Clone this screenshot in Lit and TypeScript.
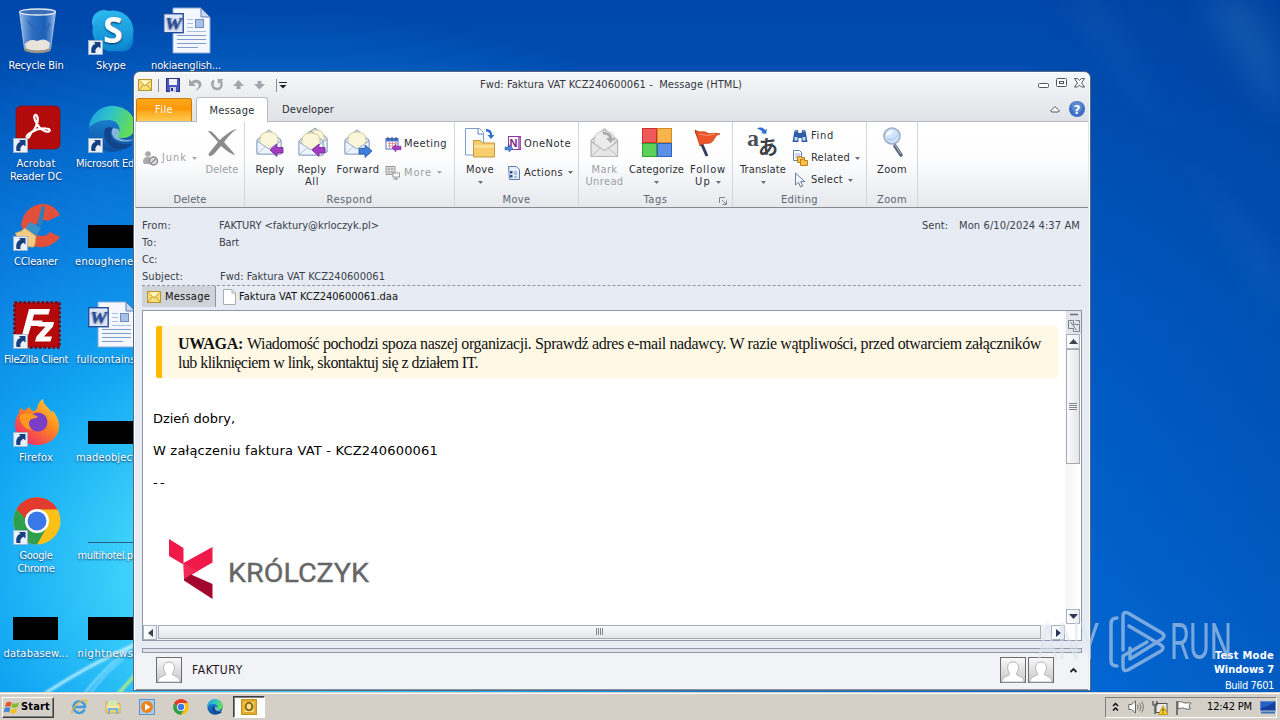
import { LitElement, html, css, svg, nothing, TemplateResult } from "lit";
import { customElement, property } from "lit/decorators.js";

/** A single line of text whose tracking is adjusted to a given advance width. */
@customElement("fit-text")
class FitText extends LitElement {
  @property({ type: Number }) w = 0;
  static styles = css`
    :host { display: inline-block; white-space: pre; }
  `;
  render() { return html`<slot></slot>`; }
  firstUpdated() {
    const n = (this.textContent || "").length;
    if (!this.w || !n) return;
    const natural = this.getBoundingClientRect().width;
    this.style.letterSpacing = `${(this.w - natural) / n}px`;
  }
}

const t = (text: string, w: number) => html`<fit-text w=${w}>${text}</fit-text>`;
const pic = (w: number, h: number, body: unknown, vb = `0 0 ${w} ${h}`) =>
  html`<svg class="pic" width=${w} height=${h} viewBox=${vb}>${body}</svg>`;

/* ---------- shared artwork ---------- */
const shortcut = svg`
  <rect x=".5" y="33.500" width="14" height="14" fill="#e9f0f8" stroke="#9db2cc" stroke-width=".8"/>
  <path d="M3.500 46c-1-5.500 1.200-8.500 4-9l-1.500-2h6.500v6.500l-2-1.800c-2.500 1-3.600 2.800-3 6.300z" fill="#173f80"/>`;
const edge = svg`
  <defs>
    <linearGradient id="eg" x1="0" y1="0" x2="1" y2=".3"><stop offset="0" stop-color="#1b9de2"/><stop offset=".5" stop-color="#2fc3c8"/><stop offset="1" stop-color="#63dc58"/></linearGradient>
    <linearGradient id="eb" x1="0" y1="0" x2="0" y2="1"><stop offset="0" stop-color="#1e8fe0"/><stop offset="1" stop-color="#0d4f9e"/></linearGradient>
  </defs>
  <circle cx="24" cy="24" r="23" fill="url(#eb)"/>
  <path d="M1 23C2 10 12 1 24 1c14 0 23 9 23 20 0 8-6 12-12 12-5 0-7-2-5-4 4-5 0-14-9-14C10 15 2 20 1 23z" fill="url(#eg)"/>
  <path d="M17 24c-3 9 3 20 16 20 5 0 9-2 12-6-4 2-20 3-22-8-.5-3 .5-5 2-7-3-1.500-6-1-8 1z" fill="#12448c"/>
  <path d="M25 23c-3 4-1 11 7 13 6 1.500 12 0 14-2-6 2-14 1-16-3-1-2 3-3 0-7z" fill="#dff3fb" opacity=".55"/>`;
const chrome = svg`
  <circle cx="24" cy="24" r="23.500" fill="#fbc116"/>
  <path d="M24 24 3.600 12.300A23.500 23.500 0 0 1 44.400 12.300H24z" fill="#e33b2e"/>
  <path d="M3.600 12.300A23.500 23.500 0 0 0 24 47.500L34 30 24 24 14 29.500z" fill="#2f9e4c"/>
  <path d="M3.600 12.300 14 30l5-15z" fill="#2f9e4c"/><path d="M3.600 12.300C9 3 17 .5 24 .5s16 3.500 20.400 11.800H24c-6 0-10 4-11.500 9z" fill="#e33b2e"/>
  <circle cx="24" cy="24" r="12" fill="#fff"/><circle cx="24" cy="24" r="9.500" fill="#3b78e7"/>`;
const wordDoc = svg`
  <path d="M10 1h28l9 9v36H10z" fill="#f4f8fe" stroke="#8da6cf"/>
  <path d="M38 1v9h9z" fill="#c9d8f0" stroke="#5d7eb5"/>
  <path d="M14 28.500h29M14 32.500h29M14 36.500h29M14 40.500h21" stroke="#7f9ccc"/>
  <path d="M24 12.500h6M24 16.500h6M24 20.500h6M24 24.500h19" stroke="#a9bee0"/>
  <rect x="32.500" y="12.500" width="8" height="8" fill="#a9c0e6" stroke="#6c8cc4"/>
  <rect x=".7" y="6.700" width="19.500" height="19" fill="#dfe8f7" stroke="#244e9c" stroke-width="1.400"/>
  <text x="2" y="22" class="wmark" textLength="17" lengthAdjust="spacingAndGlyphs">W</text>`;
const envelope = (gray = false) => svg`
  <path d="M2 12 14 2l12 10v14H2z" fill=${gray ? "#dedede" : "#dfe9f6"} stroke=${gray ? "#b5b5b5" : "#7f98bd"}/>
  <path d="M5 12q0-8 9-8t9 8v5l-9 4-9-4z" fill=${gray ? "#ececec" : "#fbf6da"} stroke=${gray ? "#c4c4c4" : "#cbbf8a"} stroke-width=".8"/>
  <path d="M2 13l12 8 12-8v13H2z" fill=${gray ? "#e6e6e6" : "#eef4fc"} stroke=${gray ? "#b5b5b5" : "#8ea6c9"} stroke-width=".9"/>
  <path d="M2 26l9-8M26 26l-9-8" stroke=${gray ? "#bbb" : "#9fb3d1"} stroke-width=".8"/>`;
const purpleArrow = svg`<path d="M16 22l7-6v3.500h6v5.500h-6v3.500z" fill="#a33bc4" stroke="#73248f" stroke-width=".8"/>`;
const person = pic(26, 26, svg`
  <defs><linearGradient id="pg" x1="0" y1="0" x2="0" y2="1"><stop offset="0" stop-color="#fafafa"/><stop offset="1" stop-color="#c6c6c6"/></linearGradient></defs>
  <rect x=".5" y=".5" width="25" height="25" fill="url(#pg)" stroke="#6d6d6d"/>
  <path d="M2 25c0-5 4-5 7-7 1-1 .5-2-.5-3.500C6.500 10 7.500 5 13 5s6.500 5 4.500 9.500c-1 1.500-1.500 2.500-.5 3.500 3 2 7 2 7 7z" fill="#fff" stroke="#b5b5b5"/>`);
const mailIcon = pic(14, 12, svg`
  <rect x=".5" y=".5" width="13" height="11" fill="#fbe07a" stroke="#b8922c"/>
  <path d="M1.500 2l5.500 5 5.500-5M1 11l4-5M13 11l-4-5" stroke="#c79a28" fill="none"/>
  <path d="M2 1.500h10L7 6z" fill="#fff6c9"/>`);
const caret = (gray = false) =>
  html`<svg class="pic caret" width="5" height="3" viewBox="0 0 5 3"><path d="M0 0h5L2.500 3z" fill=${gray ? "#aaa" : "#6a7078"}/></svg>`;

/* ---------- desktop icons ---------- */
const desk: Record<string, TemplateResult> = {
  bin: pic(48, 48, svg`
    <defs><linearGradient id="bn" x1="0" y1="0" x2="1" y2="0"><stop offset="0" stop-color="#b9d4f2" stop-opacity=".85"/><stop offset=".35" stop-color="#5e95d8" stop-opacity=".5"/><stop offset=".7" stop-color="#3a78c8" stop-opacity=".45"/><stop offset="1" stop-color="#c6dcf4" stop-opacity=".85"/></linearGradient></defs>
    <path d="M6.500 5h36l-5 37q-13 5-26 0z" fill="url(#bn)" stroke="#b7cde6" stroke-width=".8"/>
    <ellipse cx="24.500" cy="5" rx="18" ry="3" fill="#3c6fb5" stroke="#dfe8f2" stroke-width="1.300"/>
    <path d="M12 37q5-6 12-3 8-4 13 2l-1 6q-11 4-23 0z" fill="#e9e4da"/>
    <path d="M15 14q10 15 16 16l6-14" stroke="#2e64ae" fill="none" opacity=".7" stroke-width="2"/>
    <path d="M11.500 41q13 5 26 0v3q-13 4.500-26 0z" fill="#9a958c"/>`),
  skype: pic(48, 48, svg`
    <defs><linearGradient id="sk" x1="0" y1="0" x2="0" y2="1"><stop offset="0" stop-color="#2bb8ee"/><stop offset="1" stop-color="#0c86cf"/></linearGradient></defs>
    <circle cx="16" cy="15" r="12" fill="#2ab6ec"/><circle cx="34" cy="33" r="11.500" fill="#0b80cb"/><circle cx="25" cy="24" r="20.500" fill="url(#sk)"/>
    <text x="25" y="36" class="skype" text-anchor="middle">S</text>${shortcut}`),
  word: pic(48, 48, wordDoc),
  acrobat: pic(48, 48, svg`
    <rect x="3" y="1" width="44" height="43" rx="5" fill="#b30b0b" stroke="#8d0707" stroke-width=".6"/>
    <path d="M15 33c-3 0-1-4 5-6.500C24 21 26 14 24 11c-1-2.500-4-1-2 4 2 5 6 10 11 11.500 5 1 5-3 0-3-5-.5-10 1-14.500 3.500C17 30 16 33 15 33z" fill="none" stroke="#fff" stroke-width="2.200"/>${shortcut}`),
  edge: pic(48, 48, svg`${edge}${shortcut}`),
  cc: pic(48, 48, svg`
    <path d="M47 12C43 4 36 1 30 1 20 1 10 8 8 22l8 18c10 8 24 4 31-6l-10-5c-4 5-11 5-14 1-4-8 4-16 12-12z" fill="#e2503c"/>
    <path d="M12 26l5-7 11 6-5 9z" fill="#3a8fc9"/><path d="M24 21l5-18 3 1-3 19z" fill="#2c7fb9"/>
    <path d="M2 30q6-1 10-5l11 8q0 7-2 11-7 1-13-3z" fill="#f2cb84" stroke="#b98f4c" stroke-width=".6"/>${shortcut}`),
  black: pic(46, 24, svg`<rect width="45" height="23" fill="#000"/>`),
  line: pic(46, 24, svg`<path d="M0 23.500h46" stroke="#2b5d86"/>`),
  fz: pic(48, 48, svg`
    <rect x="1.500" y="1.500" width="45" height="45" fill="#b5090b" stroke="#7a0507" stroke-width="2.500" stroke-dasharray="2.500 2"/>
    <path d="M16 8h21l-1.500 5.500H21l-1.500 6h10L28 25H18l-4 13H8z" fill="#fff"/><path d="M26 21h15l-1 4.500-9 10h8l-1.500 5H22l1.500-5 9-10h-7.500z" fill="#fff"/>${shortcut}`),
  ff: pic(48, 48, svg`
    <defs><linearGradient id="fx" x1="1" y1="0" x2=".2" y2="1"><stop offset="0" stop-color="#ffe14a"/><stop offset=".45" stop-color="#ff8a1c"/><stop offset="1" stop-color="#f0256f"/></linearGradient></defs>
    <path d="M8 9c1 2 3 2 5 2 1-2 3-3 4-3 0 2 1 3 3 4 3 0 4-2 5-6 1-3 3-5 5-6 0 6 6 8 9 14 0-2 0-3-1-4 5 5 9 12 8 19-1 10-10 17-22 17S2 38 2 27c0-7 2-10 4-13 0-3 1-4 2-5z" fill="url(#fx)"/>
    <circle cx="25" cy="23" r="9.500" fill="#7a3fc4"/>
    <path d="M7 16c6-3 14-1 18 2-3 2-6 1-8 3-2 3-1 7 2 10-8 0-13-9-12-15z" fill="#ff9a1f"/>${shortcut}`),
  chrome: pic(48, 48, svg`${chrome}${shortcut}`),
};

type Item = { icon: string; lines: [string, number][]; cls?: string };
const items: (Item | null)[] = [
  { icon: "bin", lines: [["Recycle Bin", 55]] }, { icon: "skype", lines: [["Skype", 30]] }, { icon: "word", lines: [["nokiaenglish...", 70]] },
  { icon: "acrobat", lines: [["Acrobat", 39], ["Reader DC", 52]] }, { icon: "edge", lines: [["Microsoft Edge", 70]] }, null,
  { icon: "cc", lines: [["CCleaner", 44]] }, { icon: "black", cls: "thumb", lines: [["enoughener...", 72]] }, null,
  { icon: "fz", lines: [["FileZilla Client", 64]] }, { icon: "word", lines: [["fullcontains...", 69]] }, null,
  { icon: "ff", lines: [["Firefox", 34]] }, { icon: "black", cls: "thumb", lines: [["madeobject...", 70]] }, null,
  { icon: "chrome", lines: [["Google", 33], ["Chrome", 37]] }, { icon: "line", cls: "thumb", lines: [["multihotel.png", 67]] }, null,
  { icon: "black", cls: "thumb", lines: [["databasew...", 65]] }, { icon: "black", cls: "thumb", lines: [["nightnews...", 67]] }, null,
];

/* ---------- ribbon artwork ---------- */
const rib: Record<string, TemplateResult> = {
  del: pic(32, 34, svg`<path d="M2 5c5-1 8 6 12 9C20 8 26 4 31 3c-6 4-9 8-13 13 3 4 8 8 11 13-5-1-10-6-14-9-4 4-6 8-10 10-3 0-3-2-1-4l8-10C9 12 5 9 2 5z" fill="#8b8b8b"/>`),
  reply: pic(32, 34, svg`<g transform="translate(1 2)">${envelope()}</g><g transform="translate(0 2)">${purpleArrow}</g>`),
  replyAll: pic(32, 34, svg`<g transform="translate(5 0)">${envelope()}</g><g transform="translate(1 3)">${envelope()}</g><g transform="translate(0 2)">${purpleArrow}</g>`),
  forward: pic(32, 34, svg`<g transform="translate(1 2)">${envelope()}</g><path d="M30 25l-7-6v3.500h-6V28h6v3.500z" fill="#3f7fdc" stroke="#23539f" stroke-width=".8"/>`),
  move: pic(32, 34, svg`<path d="M1.500 2.500h14l4 4V29h-18z" fill="#fdfeff" stroke="#7d9cc8"/><path d="M14 3v5h5" fill="none" stroke="#5f82b8"/><path d="M22 3c4 0 6 2 6 6h2.500L27 13l-3.500-4H26c0-2-1.500-3.500-4-3.500z" fill="#2f70d0"/><path d="M9.500 14.500h7l2 2.500h12v14h-21z" fill="#f6cf6c" stroke="#c4973a"/><path d="M10 19h20v3H10z" fill="#fbe09a"/>`),
  unread: pic(32, 34, svg`<g transform="translate(0 .5) scale(1.100 1.150)">${envelope(true)}</g><path d="M14 6c6 0 9 2 9 6h3l-4.500 5L17 12h3c0-2-2-3.500-6-3.500z" fill="#aaa"/>`),
  cat: pic(32, 34, svg`<rect x="1.500" y="2.500" width="14" height="14" fill="#ee5a5a" stroke="#cf2f2f"/><rect x="16.500" y="2.500" width="14" height="14" fill="#f9b54d" stroke="#d68a1d"/><rect x="1.500" y="17.500" width="14" height="13" fill="#5cd05c" stroke="#2da52d"/><rect x="16.500" y="17.500" width="14" height="13" fill="#5b8fe8" stroke="#2f61c0"/>`),
  flag: pic(32, 34, svg`<path d="M4 5l11 25" stroke="#33405c" stroke-width="3"/><path d="M3 4c5 4 8 0 12 3 3 2 7-1 13 1-6 1-5 7-10 9-4 1-6-1-10 3z" fill="#ee5528" stroke="#c43a15" stroke-width=".8"/><path d="M7 8q9 3 16 0" stroke="#f99a6c" fill="none"/>`),
  translate: pic(32, 34, svg`<path d="M10 3c3-3 7-1 8 1l2-1-1 5-5-1 1.500-1C14 4 12 3 10 3z" fill="#2f70d0"/><text x="0" y="20" class="tr-a">a</text><text x="11" y="29" class="tr-b" textLength="20" lengthAdjust="spacingAndGlyphs">あ</text>`),
  zoom: pic(32, 34, svg`<path d="M19 20l6 9" stroke="#5c6775" stroke-width="3.600" stroke-linecap="round"/><path d="M19 19l6 9" stroke="#a0abba" stroke-width="1.200"/><circle cx="16" cy="10" r="8" fill="#cfe3fa" stroke="#9dafc6" stroke-width="1.600"/><path d="M10 10c0-4 4-6 7-6 0 4-3 5-7 6z" fill="#fff" opacity=".8"/><path d="M11 13q6 3 11-4" stroke="#9fc3ee" fill="none"/>`),
};
const small: Record<string, TemplateResult> = {
  junk: pic(16, 16, svg`<circle cx="5" cy="4" r="2.800" fill="#a9a9a9"/><path d="M0 12c0-4 2-5 5-5 2 0 3 1 4 2l-2 5H1z" fill="#a9a9a9"/><circle cx="10.500" cy="11" r="4" fill="#ddd" stroke="#8e8e8e" stroke-width="1.500"/><path d="M8 13.500l5-5" stroke="#8e8e8e" stroke-width="1.300"/>`),
  meeting: pic(16, 16, svg`<rect x="1" y="2.500" width="12" height="10.500" fill="#fff" stroke="#4a73c4"/><path d="M1 3h12v2.500H1z" fill="#4a73c4"/><path d="M3 7.500h9M3 10h9M4.500 6v6M7.500 6v6M10.500 6v6" stroke="#e98a8a" stroke-width=".9"/><path d="M3 1v3M7 1v3M11 1v3" stroke="#23489a"/><path d="M7 12l4-3.800v2h5v3.600h-5v2z" fill="#a33bc4" stroke="#73248f" stroke-width=".5"/>`),
  more: pic(16, 16, svg`<rect x="1" y="1.500" width="9" height="8" fill="#eee" stroke="#999"/><path d="M1 4h9M1 7h9M4 1v8M7 1v8" stroke="#999" stroke-width=".8"/><rect x="8" y="8" width="6.500" height="4" fill="#fff" stroke="#999"/><path d="M8 14h5M11 12v3" stroke="#999"/>`),
  onenote: pic(16, 16, svg`<rect x="3.500" y=".5" width="12" height="13" fill="#fff" stroke="#8a3a96"/><path d="M13 1h2.500v12H13z" fill="#b276bd"/><text x="4.500" y="11" class="nmark">N</text><path d="M0 11h4V8.800l4 3.700-4 3.500v-2H0z" fill="#4f86dc" stroke="#2b58a6" stroke-width=".5"/>`),
  actions: pic(16, 16, svg`<path d="M3.500 1.500h8l3 3v10h-10z" fill="#e6eefa" stroke="#5b7db3"/><rect x="5" y="6" width="2.500" height="2.500" fill="#2c4f8e"/><rect x="5" y="10" width="2.500" height="2.500" fill="#2c4f8e"/><path d="M9 7h3M9 9h3M9 12h3" stroke="#7393c6"/>`),
  find: pic(16, 16, svg`<path d="M2 5l1-3h3l.5 3h3L10 2h3l1 3 1.500 9h-6v-4h-3v4H.5z" fill="#2f5ea8"/><path d="M2.500 9h3v3.500h-3zM10.500 9h3v3.500h-3z" fill="#bcd5f5"/><path d="M3.500 3h2M10.500 3h2" stroke="#a9c6ee"/>`),
  related: pic(16, 16, svg`<path d="M1.500.5h6l2 2v8h-8z" fill="#fff" stroke="#5f7fae"/><path d="M3 4h5M3 6h5M3 8h5" stroke="#7ea0d6" stroke-width=".8"/><path d="M5.500 6.500h3l1 1h3v5h-7z" fill="#f7c04d" stroke="#c07f17"/><path d="M8.500 9.500h3l1 1h3v5h-7z" fill="#f7c04d" stroke="#c07f17"/>`),
  select: pic(16, 16, svg`<path d="M3.500 1v12l3-2.800 2 4.800 2.200-1-2-4.500h4z" fill="#f4f8ff" stroke="#6c7f9f"/>`),
};

const big = (icon: string, w: number, lines: TemplateResult[], dim = false) => html`
  <div class="big ${dim ? "dim" : ""}" style="width:${w}px">${rib[icon]}${lines.map((l) => html`<div class="ln">${l}</div>`)}</div>`;
const row = (icon: string, label: string, w: number, drop = false, dim = false) => html`
  <div class="srow ${dim ? "dim" : ""}">${small[icon]}<span>${t(label, w)}</span>${drop ? caret(dim) : nothing}</div>`;
const group = (w: number, label: TemplateResult, body: TemplateResult, cls = "") => html`
  <section class="group ${cls}" style="width:${w}px"><div class="gbody">${body}</div><div class="glabel">${label}</div></section>`;

@customElement("app-root")
class AppRoot extends LitElement {
  static styles = css`
    :host { display: block; position: relative; width: 1280px; height: 720px; overflow: hidden;
      font: 11px/12px "DejaVu Sans Condensed", "DejaVu Sans", sans-serif; color: #2b2f36; }
    * { box-sizing: border-box; }
    .pic { display: block; flex: none; overflow: visible; }
    .desktop { height: 720px; display: flex; flex-direction: column; }
    .paper { flex: 1; position: relative; overflow: hidden; display: flex; justify-content: space-between; align-items: flex-end;
      background:
        linear-gradient(90deg, rgba(0,60,150,0) 80%, rgba(0,45,120,.22) 100%),
        radial-gradient(ellipse 720px 560px at 280px 570px, #6df0ff 0%, #3fd3fb 20%, #12a6f3 42%, #0a80e0 64%, rgba(5,98,208,0) 100%),
        linear-gradient(180deg, #0048aa 0%, #005ac4 45%, #026ad8 100%); }
    .rays { position: absolute; left: 0; top: 0; }
    .icons { align-self: flex-start; margin-left: -1px; display: grid; grid-template-columns: repeat(3, 75px); grid-auto-rows: 98px; position: relative; }
    .item { display: flex; flex-direction: column; align-items: center; padding-top: 7px; color: #fff; text-shadow: 0 1px 2px rgba(0,20,60,.8); }
    .slot { height: 52px; display: flex; align-items: flex-start; justify-content: center; }
    .thumb .slot { padding-top: 22px; margin-left: -1px; }
    .item .ln { height: 13px; line-height: 13px; margin-left: -1px; }
    .wmark { font: italic bold 17px "Liberation Serif", serif; fill: #274f9e; }
    .skype { font: bold 36px "Open Sans", sans-serif; fill: #fff; }
    .tr-a { font: bold 24px "Liberation Serif", serif; fill: #4b4f55; }
    .tr-b { font: bold 20px "Noto Sans CJK JP", sans-serif; fill: #3d4147; }
    .nmark { font: bold 11px "Liberation Sans", sans-serif; fill: #7a2587; }
    .build { position: relative; width: 120px; padding: 0 6px 0 0; text-align: right; color: #fff; line-height: 14px; }
    .build b { display: block; }
    .build div { margin-top: 2px; line-height: 13px; }

    .window { position: absolute; left: 133px; top: 71px; width: 958px; height: 620px; border: 1px solid #56687e; border-radius: 7px 7px 0 0;
      box-shadow: inset 0 0 0 1px #fff; overflow: hidden; padding: 0 2px; display: flex; flex-direction: column;
      background: linear-gradient(180deg, #f6f7f8 0, #dfe3e7 50px, #e7ebf3 137px); }
    .title { height: 25px; flex: none; display: flex; align-items: center; padding: 1px 3px 0 2px; color: #33383f; }
    .title .name { margin: 0 auto 0 193px; }
    .qat { display: flex; align-items: center; gap: 8px; flex: none; }
    .bar { width: 1px; height: 13px; background: #8d9299; flex: none; }
    .bar.a { margin: 0 -1px 0 -2px; } .bar.b { margin: 0 -6px 0 2px; }
    .tabs { height: 24px; flex: none; display: flex; align-items: flex-end; }
    .file { width: 56px; height: 23px; border-radius: 3px 3px 0 0; border: 1px solid #c97a08; border-bottom: 0; color: #fff;
      background: linear-gradient(180deg, #fda91d, #fb9705 45%, #fdab22 60%, #ffcb4d); display: grid; place-items: center; }
    .tab { height: 24px; display: grid; place-items: center; padding-top: 1px; }
    .tab.on { width: 72px; margin-left: 4px; background: #fff; border: 1px solid #b7bcc3; border-bottom: 0; border-radius: 3px 3px 0 0; position: relative; z-index: 1; margin-bottom: -1px; height: 25px; padding: 1px 0 0 0; }
    .tab.dev { margin-left: 14px; }
    .tabs .right { margin-left: auto; padding: 0 3px 4px 0; }
    .ribbon { height: 87px; flex: none; border-top: 1px solid #b4b9c0; border-bottom: 1px solid #868b92; display: flex;
      background: linear-gradient(180deg, #fff 0, #fdfdfe 45%, #eef0f3 80%, #e6e8ec 100%); border-left: 1px solid #d5d9de; margin-left: -1px; }
    .group { flex: none; display: flex; flex-direction: column; border-right: 1px solid #d3d7dc; }
    .gbody { height: 70px; display: flex; align-items: flex-start; padding-top: 4px; }
    .glabel { height: 15px; padding-top: 1px; display: flex; justify-content: center; align-items: center; color: #5d6773; position: relative; }
    .launch { position: absolute; right: 5px; bottom: 2px; }
    .big { display: flex; flex-direction: column; align-items: center; flex: none; }
    .big > .pic:first-child { margin-bottom: 4px; }
    .big .ln { height: 12px; display: flex; align-items: center; white-space: nowrap; gap: 5px; }
    .dim { color: #9b9fa5; }
    .col { height: 66px; margin-top: -1px; display: flex; flex-direction: column; justify-content: center; }
    .srow { height: 22px; display: flex; align-items: center; }
    .col.two .srow { height: 29px; }
    .srow span { margin: 0 5px 0 3px; }
    .g1 .gbody { padding-left: 7px; gap: 5px; } .g2 .gbody { padding-left: 7px; gap: 3px; } .g2 .col { margin-left: 2px; }
    .g3 .gbody { padding-left: 4px; gap: 4px; } .g4 .gbody { padding-left: 4px; gap: 2px; }
    .g5 .gbody { padding-left: 5px; gap: 4px; } .g6 .gbody { padding-left: 10px; }

    .heads { height: 78px; flex: none; margin: 0 7px 0 6px; padding-top: 9px; border-bottom: 1px dashed #8f97a3; display: grid; grid-template-columns: 77px 1fr auto; grid-auto-rows: 17px; align-items: center; color: #3a414c; }
    .sent { display: flex; gap: 11px; padding-right: 1px; }
    .subj { padding-left: 1px; }
    .atts { height: 24px; flex: none; padding-left: 6px; display: flex; align-items: flex-start; color: #111; }
    .att { height: 21px; display: flex; align-items: center; gap: 4px; }
    .att.on { width: 74px; background: #d0d4d8; border-right: 1px solid #8e949c; padding-left: 5px; }
    .att.fileatt { padding-left: 7px; gap: 3px; }
    .mail { height: 331px; flex: none; margin: 0 6px; border: 1px solid #8d97a6; background: #fff; display: grid; grid-template: 314px 15px / 922px 16px; width: 940px; }
    .page { padding: 15px 0 0 13px; color: #000; overflow: hidden; }
    .banner { width: 902px; height: 52px; background: #fff8e5; border-left: 6px solid #ffb900; border-radius: 2px; padding: 8px 0 0 16px; font: 16px/19px "Liberation Serif", serif; color: #111; }
    .banner .bl { display: flex; gap: 4px; height: 19px; }
    .msg { font: 13px/16px "DejaVu Sans", sans-serif; padding-top: 33px; margin-left: -3px; }
    .msg p { margin: 0 0 16px; height: 16px; }
    .logo { margin: 47px 0 0 12px; }
    .brand { font: 400 26px "Roboto", sans-serif; fill: #666; stroke: #666; stroke-width: .35; }
    .vs { display: flex; flex-direction: column; align-items: center; background: linear-gradient(90deg, #f5f6f8, #fff); }
    .sb { width: 14px; height: 15px; border: 1px solid #a9b2bf; background: linear-gradient(90deg, #fff, #e9edf2); display: grid; place-items: center; flex: none; }
    .vthumb { width: 14px; height: 115px; border: 1px solid #a6abb3; background: linear-gradient(90deg, #fbfbfc, #e3e5e9); display: grid; place-items: center; }
    .vs .top { width: 15px; height: 23px; background: #e1e5ea; display: grid; place-items: center; }
    .vs .end { margin-top: auto; margin-bottom: 1px; }
    .hs { display: flex; background: #eff1f4; }
    .hthumb { width: 883px; height: 14px; margin-left: 1px; border: 1px solid #a6abb3; background: linear-gradient(180deg, #fafafa, #e3e5e9); display: grid; place-items: center; }
    .hs .r { margin-left: auto; }
    .split { height: 5px; flex: none; margin: 7px 6px 0; border: 1px solid #9098a6; background: #dfe3e9; }
    .people { flex: none; height: 37px; display: flex; align-items: center; padding: 0 11px 2px 20px; color: #26151f; font-size: 12px; background: #f1f3f6; border-bottom: 1px solid #8792a2; }
    .people .who { margin-left: 10px; flex: 1; }
    .people .pair { display: flex; gap: 2px; margin-right: 16px; }

    .task { height: 28px; background: #d4d0c8; box-shadow: inset 0 1px 0 #d4d0c8, inset 0 2px 0 #fff; display: flex; padding: 4px 3px 2px 2px; align-items: center; color: #000; }
    .start { width: 52px; height: 21px; border: 1px solid; border-color: #fff #404040 #404040 #fff; box-shadow: inset -1px -1px 0 #808080; display: flex; align-items: center; gap: 1px; padding-left: 1px; font-weight: bold; }
    .apps { display: flex; gap: 18px; margin-left: 17px; }
    .active { width: 32px; height: 22px; margin-left: 10px; background: #fff; border: 1px solid; border-color: #404040 #fff #fff #404040; box-shadow: inset 1px 1px 0 #808080; display: grid; place-items: center; }
    .omark { font: bold 12px "Liberation Sans", sans-serif; fill: #8a5f00; }
    .tray { margin-left: auto; width: 172px; height: 21px; border: 1px solid; border-color: #808080 #fff #fff #808080; display: flex; align-items: center; padding-left: 6px; }
    .tray .v { margin-left: 9px; } .tray .n { margin-left: 8px; } .tray .f { margin-left: 8px; } .tray .c { margin: 0 8px 0 15px; }
    .water { position: absolute; left: 1034px; top: 606px; opacity: .55; pointer-events: none; overflow: visible; }
    .wtxt { font: 400 50px "Roboto", sans-serif; fill: #dbe5ef; }
    .qm { font: bold 12px "DejaVu Sans", sans-serif; fill: #fff; }
  `;

  private renderRibbon() {
    return html`<div class="ribbon">
      ${group(109, t("Delete", 33), html`<div class="col">${row("junk", "Junk", 25, true, true)}</div>${big("del", 40, [t("Delete", 33)], true)}`, "g1")}
      ${group(210, t("Respond", 46), html`
        ${big("reply", 36, [t("Reply", 29)])}${big("replyAll", 42, [t("Reply", 29), t("All", 14)])}${big("forward", 44, [t("Forward", 43)])}
        <div class="col two">${row("meeting", "Meeting", 43)}${row("more", "More", 28, true, true)}</div>`, "g2")}
      ${group(124, t("Move", 28), html`
        ${big("move", 42, [t("Move", 28), caret()])}
        <div class="col two">${row("onenote", "OneNote", 47)}${row("actions", "Actions", 39, true)}</div>`, "g3")}
      ${group(154, html`${t("Tags", 24)}<svg class="pic launch" width="8" height="8"><path d="M.5 6V.5H6M3 3l4 4M7.500 3.500v4h-4" stroke="#7d8590" fill="none"/></svg>`, html`
        ${big("unread", 43, [t("Mark", 26), t("Unread", 38)], true)}
        ${big("cat", 57, [t("Categorize", 55), caret()])}
        ${big("flag", 42, [t("Follow", 36), html`${t("Up", 16)}${caret()}`])}`, "g4")}
      ${group(134, t("Editing", 37), html`
        ${big("translate", 50, [t("Translate", 46), caret()])}
        <div class="col">${row("find", "Find", 23)}${row("related", "Related", 39, true)}${row("select", "Select", 32, true)}</div>`, "g5")}
      ${group(51, t("Zoom", 30), html`${big("zoom", 30, [t("Zoom", 30)])}`, "g6")}
    </div>`;
  }

  private renderMail() {
    const grip = svg`<path d="M0 .5h8M0 2.500h8M0 4.500h8M0 6.500h8" stroke="#80868f"/>`;
    return html`<div class="mail">
      <div class="page">
        <div class="banner">
          <div class="bl"><b>${t("UWAGA:", 65)}</b>${t("Wiadomość pochodzi spoza naszej organizacji. Sprawdź adres e-mail nadawcy. W razie wątpliwości, przed otwarciem załączników", 794)}</div>
          <div class="bl">${t("lub kliknięciem w link, skontaktuj się z działem IT.", 300)}</div>
        </div>
        <div class="msg">
          <p>${t("Dzień dobry,", 82)}</p>
          <p>${t("W załączeniu faktura VAT - KCZ240600061", 285)}</p>
          <p>${t("--", 14)}</p>
        </div>
        <div class="logo">${pic(202, 62, svg`
          <path d="M1 1l14.500 9v16.500L1 18z" fill="#ef1a4a"/>
          <path d="M15.500 25L44.500 9v15.500L16 41z" fill="#ef1a4a"/>
          <path d="M15.500 25L30 33 16 41z" fill="#f02a55"/>
          <path d="M16 41l7-4.500L44.500 46v15L16 42.500z" fill="#a3062f"/>
          <text class="brand" x="60" y="43.500" textLength="141" lengthAdjust="spacingAndGlyphs">KRÓLCZYK</text>`)}</div>
      </div>
      <div class="vs">
        <div class="top">${pic(13, 21, svg`<path d="M3 2.500h8" stroke="#6a717b" stroke-width="1.500"/><path d="M1.500 8.500h5v4h6v7h-6v-3h-5zM8.500 8.500h4v3M3.500 10l6 8" fill="none" stroke="#7b838e"/>`)}</div>
        <div class="sb">${pic(9, 5, svg`<path d="M0 5l4.500-5L9 5z" fill="#3b4250"/>`)}</div>
        <div class="vthumb">${pic(8, 7, grip)}</div>
        <div class="sb end">${pic(9, 5, svg`<path d="M0 0h9L4.500 5z" fill="#30365a"/>`)}</div>
      </div>
      <div class="hs">
        <div class="sb">${pic(5, 8, svg`<path d="M5 0v8L0 4z" fill="#3b4250"/>`)}</div>
        <div class="hthumb">${pic(7, 8, svg`<path d="M.5 0v7M2.500 0v7M4.500 0v7M6.500 0v7" stroke="#80868f"/>`)}</div>
        <div class="sb r">${pic(5, 8, svg`<path d="M0 0v8l5-4z" fill="#30365a"/>`)}</div>
      </div>
      <div></div>
    </div>`;
  }

  private renderWindow() {
    return html`<div class="window">
      <div class="title">
        <div class="qat">${mailIcon}<i class="bar a"></i>
          ${pic(14, 14, svg`<rect x=".5" y=".5" width="13" height="13" fill="#4a55c0" stroke="#2a3285"/><rect x="3" y="1" width="8" height="6" fill="#f1f4fb"/><rect x="4" y="9" width="6" height="5" fill="#c9d0ea"/><rect x="5" y="10" width="2" height="3" fill="#2a3285"/>`)}
          ${pic(14, 14, svg`<path d="M1 1v7h7L5.500 5.500c3-2 6 0 5 3.500L7 13c7-3 8-7 5-10C9.500 1 6 1.500 3.500 3.500z" fill="#a3a7ad"/>`)}
          ${pic(14, 14, svg`<path d="M4 2.500C1 5 2 11 7 11S12.500 6 10.500 2" fill="none" stroke="#a3a7ad" stroke-width="2.400"/><path d="M7.500 1h6L8 6z" fill="#a3a7ad"/>`)}
          ${pic(13, 10, svg`<path d="M6.500 0L12 6H8.500v3h-4V6H1z" fill="#a3a7ad"/>`)}
          ${pic(13, 10, svg`<path d="M6.500 9.500L12 4H8.500V1h-4v3H1z" fill="#a3a7ad"/>`)}
          <i class="bar b"></i>${pic(8, 7, svg`<path d="M0 .5h8" stroke="#222"/><path d="M.5 3h7L4 6.500z" fill="#222"/>`)}
        </div>
        <div class="name">${t("Fwd: Faktura VAT KCZ240600061 -  Message (HTML)", 262)}</div>
        <svg class="pic" width="49" height="12" viewBox="0 0 49 12"><g fill="#fff" stroke="#50555c"><rect x="2.500" y="4.500" width="10" height="4" rx="1"/><rect x="20.500" y="-.5" width="10" height="8" rx="1"/><rect x="23.500" y="2.500" width="4" height="2"/><path d="M38.500-.5h3l2 2 2-2h3L45.500 4l3 4h-3l-2-2-2 2h-3l3-4z"/></g></svg>
      </div>
      <div class="tabs">
        <div class="file">${t("File", 18)}</div><div class="tab on">${t("Message", 45)}</div><div class="tab dev">${t("Developer", 52)}</div>
        <svg class="pic right" width="41" height="20" viewBox="0 0 38 16"><path d="M3.500 10l4.500-4.500 4.500 4.500L11 11H5z" fill="#fff" stroke="#50555c"/><circle cx="30" cy="8" r="8" fill="#3f6fc4"/><circle cx="30" cy="6" r="5.500" fill="#6f97df" opacity=".6"/><text x="30" y="12.500" text-anchor="middle" class="qm">?</text></svg>
      </div>
      ${this.renderRibbon()}
      <div class="heads">
        <span>${t("From:", 29)}</span><span>${t("FAKTURY <faktury@krloczyk.pl>", 160)}</span><span class="sent">${t("Sent:", 26)}${t("Mon 6/10/2024 4:37 AM", 121)}</span>
        <span>${t("To:", 15)}</span><span>${t("Bart", 20)}</span><span></span>
        <span>${t("Cc:", 15)}</span><span></span><span></span>
        <span>${t("Subject:", 41)}</span><span class="subj">${t("Fwd: Faktura VAT KCZ240600061", 165)}</span><span></span>
      </div>
      <div class="atts">
        <div class="att on">${mailIcon}${t("Message", 45)}</div>
        <div class="att fileatt">${pic(13, 16, svg`<path d="M.5.5h8.500l3.500 3.500v11.500H.5z" fill="#fff" stroke="#a9adb3"/><path d="M9 .5V4h3.500" fill="#e6e8eb" stroke="#a9adb3"/>`)}${t("Faktura VAT KCZ240600061.daa", 159)}</div>
      </div>
      ${this.renderMail()}
      <div class="split"></div>
      <div class="people">${person}<span class="who">${t("FAKTURY", 51)}</span><div class="pair">${person}${person}</div>
        ${pic(7, 5, svg`<path d="M.5 4L3.500 1l3 3" fill="none" stroke="#222" stroke-width="1.800"/>`)}</div>
    </div>`;
  }

  render() {
    return html`<div class="desktop">
      <div class="paper">
        <svg class="rays" width="1280" height="692">
          <defs><filter id="soft"><feGaussianBlur stdDeviation="1.200"/></filter><filter id="wide"><feGaussianBlur stdDeviation="14"/></filter></defs>
          <g filter="url(#soft)" fill="none" stroke="#d4f8ff">
            <path d="M44 694Q90 664 138 643" stroke-width="3" opacity=".85"/><path d="M84 694Q104 668 140 640" stroke-width="2" opacity=".6"/>
            <path d="M90 694Q104 674 124 658" stroke-width="1.500" opacity=".6"/><path d="M118 694l18-20" stroke="#b6f07a" stroke-width="3"/>
          </g>
          <g filter="url(#wide)" fill="#4f95d6" opacity=".22"><path d="M1200 0h50l30 60v60z"/><path d="M1060 0h40l180 330v-60z" opacity=".5"/></g>
        </svg>
        <div class="icons">${items.map((i) => i
          ? html`<div class="item ${i.cls || ""}"><div class="slot">${desk[i.icon]}</div>${i.lines.map(([s, w]) => html`<div class="ln">${t(s, w)}</div>`)}</div>`
          : html`<div></div>`)}</div>
        <div class="build"><b>${t("Test Mode", 59)}</b><b>${t("Windows 7", 60)}</b><div>${t("Build 7601", 49)}</div></div>
      </div>
      <div class="task">
        <div class="start">${pic(16, 15, svg`<path d="M2 3q3-2 5.500-.5L6.500 7Q4 5.500 1 7z" fill="#e8542a"/><path d="M8.500 3Q11 4.500 15 2.500L13.500 7Q10 8.500 7.500 7z" fill="#7dbb2f"/><path d="M.8 8Q4 6.500 6.200 8l-1 4.500Q3 11-.3 12.500z" fill="#3c87d8"/><path d="M7.200 8.500Q10 10 13.200 8L12 12.500q-3 2-5.800 0z" fill="#f8c21c"/>`)}${t("Start", 29)}</div>
        <div class="apps">
          ${pic(16, 16, svg`<path d="M13.500 10.500A5.800 5.800 0 1 1 14 8H4" fill="none" stroke="#3f9be0" stroke-width="2.400"/><path d="M1 15C-1 11 9 0 15 1c1 .5 1 2 0 4" fill="none" stroke="#edbd37" stroke-width="1.300"/>`)}
          ${pic(16, 16, svg`<path d="M1 3h5l1 1.500h8V14H1z" fill="#f0cf6b" stroke="#c9a03c" stroke-width=".7"/><path d="M3 1.500h9v5H3z" fill="#cfe8b4"/><path d="M1.500 6.500h13v3h-13z" fill="#fae9a6"/><path d="M4 15v-5h8v5" fill="none" stroke="#6fb6e4" stroke-width="2"/>`)}
          ${pic(16, 16, svg`<rect x=".5" y=".5" width="15" height="15" fill="#a8cdee" stroke="#5f92c7"/><circle cx="8" cy="8" r="6" fill="#f08218"/><path d="M6 4.500L11.500 8 6 11.500z" fill="#fff"/>`)}
          ${pic(16, 16, chrome, "0 0 48 48")}${pic(16, 16, edge, "0 0 48 48")}
        </div>
        <div class="active">${pic(16, 16, svg`<rect x=".8" y=".8" width="14.400" height="14.400" fill="#fbd24a" stroke="#c98d14" stroke-width="1.500"/><rect x="3" y="2.500" width="10" height="11" fill="#f8e08c" stroke="#d29c22" stroke-width=".8"/><text x="8" y="12.300" class="omark" text-anchor="middle">O</text>`)}</div>
        <div class="tray">
          ${pic(7, 10, svg`<path d="M1 4l2.500-2.500L6 4M1 8.500L3.500 6 6 8.500" fill="none" stroke="#000" stroke-width="1.400"/>`)}
          <span class="v">${pic(16, 14, svg`<path d="M.8 4.500h2.700L7.500 1v12L3.500 9.500H.8z" fill="#fff" stroke="#666"/><path d="M9.500 4.500q1.500 2.500 0 5M11.700 3q2.500 4 0 8M13.700 1.500q3.300 5.500 0 11" fill="none" stroke="#777"/>`)}</span>
          <span class="n">${pic(16, 15, svg`<rect x="4" y="3.500" width="11" height="9" fill="#e9edf2" stroke="#555"/><path d="M1 1v4h4V1M3 5v9" fill="none" stroke="#444" stroke-width="1.200"/><path d="M11 5.500l5 9H6.500z" fill="#fbd02b" stroke="#b58a00" stroke-width=".7"/><path d="M11 8.500v3M11 12.500v1" stroke="#222"/>`)}</span>
          <span class="f">${pic(16, 15, svg`<path d="M1 1v14" stroke="#555" stroke-width="1.500"/><path d="M2 2c4-1.500 5 1.500 8 1q2-.5 5 0l-2 3 1.500 3c-4 1-5.500-1-8-1q-2 0-4.500 1z" fill="#fff" stroke="#666"/>`)}</span>
          <span class="c">${t("12:42 PM", 45)}</span>
          ${pic(16, 13, svg`<rect x=".5" y=".5" width="15" height="9" fill="#2360c9" stroke="#5e87c4"/><path d="M1 7Q7 6 15 1v8H1z" fill="#133f9b"/><path d="M1 11.500h14" stroke="#3f6fb9" stroke-width="2"/>`)}
        </div>
      </div>
    </div>
    ${this.renderWindow()}
    <svg class="water" width="200" height="76">
      <text class="wtxt" x="3" y="53" textLength="62" lengthAdjust="spacingAndGlyphs">ANY</text>
      <text class="wtxt" x="136" y="53" textLength="62" lengthAdjust="spacingAndGlyphs">RUN</text>
      <g fill="none" stroke="#dbe5ef" stroke-width="3.500" stroke-linejoin="round" stroke-linecap="round">
        <path d="M83 12q-6 0-6 6v37q0 5 6 5"/>
        <path d="M89 44V10q0-5 5-3l34 20q4 3 0 6L96 53V42"/>
        <path d="M95 20L127 39q4 3 0 6L94 64q-5 2-5-3V50l24-14"/>
      </g>
    </svg>`;
  }
}
